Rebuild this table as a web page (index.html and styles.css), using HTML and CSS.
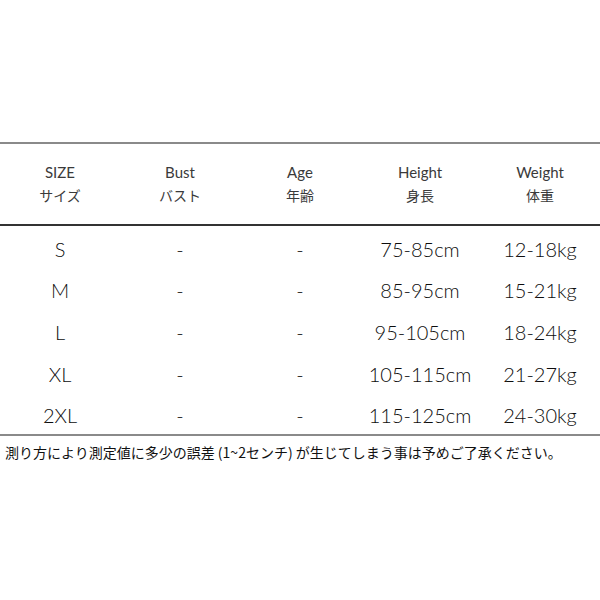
FILE: index.html
```html
<!DOCTYPE html>
<html lang="ja">
<head>
<meta charset="utf-8">
<link rel="stylesheet" href="styles.css">
</head>
<body>
<div class="page">
  <div class="chart">
    <div class="head">
      <div class="hcell"><span>SIZE</span><span>サイズ</span></div>
      <div class="hcell"><span>Bust</span><span>バスト</span></div>
      <div class="hcell"><span>Age</span><span>年齢</span></div>
      <div class="hcell"><span>Height</span><span>身長</span></div>
      <div class="hcell"><span>Weight</span><span>体重</span></div>
    </div>
    <div class="body">
      <div class="row"><div>S</div><div>-</div><div>-</div><div>75-85cm</div><div>12-18kg</div></div>
      <div class="row"><div>M</div><div>-</div><div>-</div><div>85-95cm</div><div>15-21kg</div></div>
      <div class="row"><div>L</div><div>-</div><div>-</div><div>95-105cm</div><div>18-24kg</div></div>
      <div class="row"><div>XL</div><div>-</div><div>-</div><div>105-115cm</div><div>21-27kg</div></div>
      <div class="row"><div>2XL</div><div>-</div><div>-</div><div>115-125cm</div><div>24-30kg</div></div>
    </div>
  </div>
  <p class="note">測り方により測定値に多少の誤差 (1~2センチ) が生じてしまう事は予めご了承ください。</p>
</div>
</body>
</html>
```
FILE: styles.css
```css
html, body {
  margin: 0;
  padding: 0;
  background: #fff;
}
.page {
  width: 600px;
  height: 600px;
  padding-top: 142px;
  box-sizing: border-box;
  font-family: Lato, "Noto Sans CJK JP", sans-serif;
  color: #2a2a2a;
}
.chart {
  border-top: 2px solid #8a8a8a;
  border-bottom: 2px solid #8a8a8a;
}
.head {
  display: grid;
  grid-template-columns: repeat(5, 120px);
  height: 82px;
  border-bottom: 2px solid #333;
  box-sizing: border-box;
  align-items: center;
}
.hcell {
  display: flex;
  flex-direction: column;
  align-items: center;
  font-size: 15px;
  font-weight: 400;
  line-height: 23px;
  color: #3a3a3a;
}
.hcell span:last-child {
  font-size: 14px;
}
.body {
  display: flex;
  flex-direction: column;
  height: 208px;
}
.row {
  display: grid;
  grid-template-columns: repeat(5, 120px);
  height: 41.6px;
  box-sizing: border-box;
  padding-top: 4px;
  align-items: center;
  justify-items: center;
  font-size: 20px;
  font-weight: 300;
  line-height: 1;
  color: #0d0d0d;
}
.note {
  margin: 0;
  padding: 6px 0 0 5px;
  font-family: "Noto Sans CJK JP", sans-serif;
  font-size: 14px;
  line-height: 20px;
  color: #111;
}
```
